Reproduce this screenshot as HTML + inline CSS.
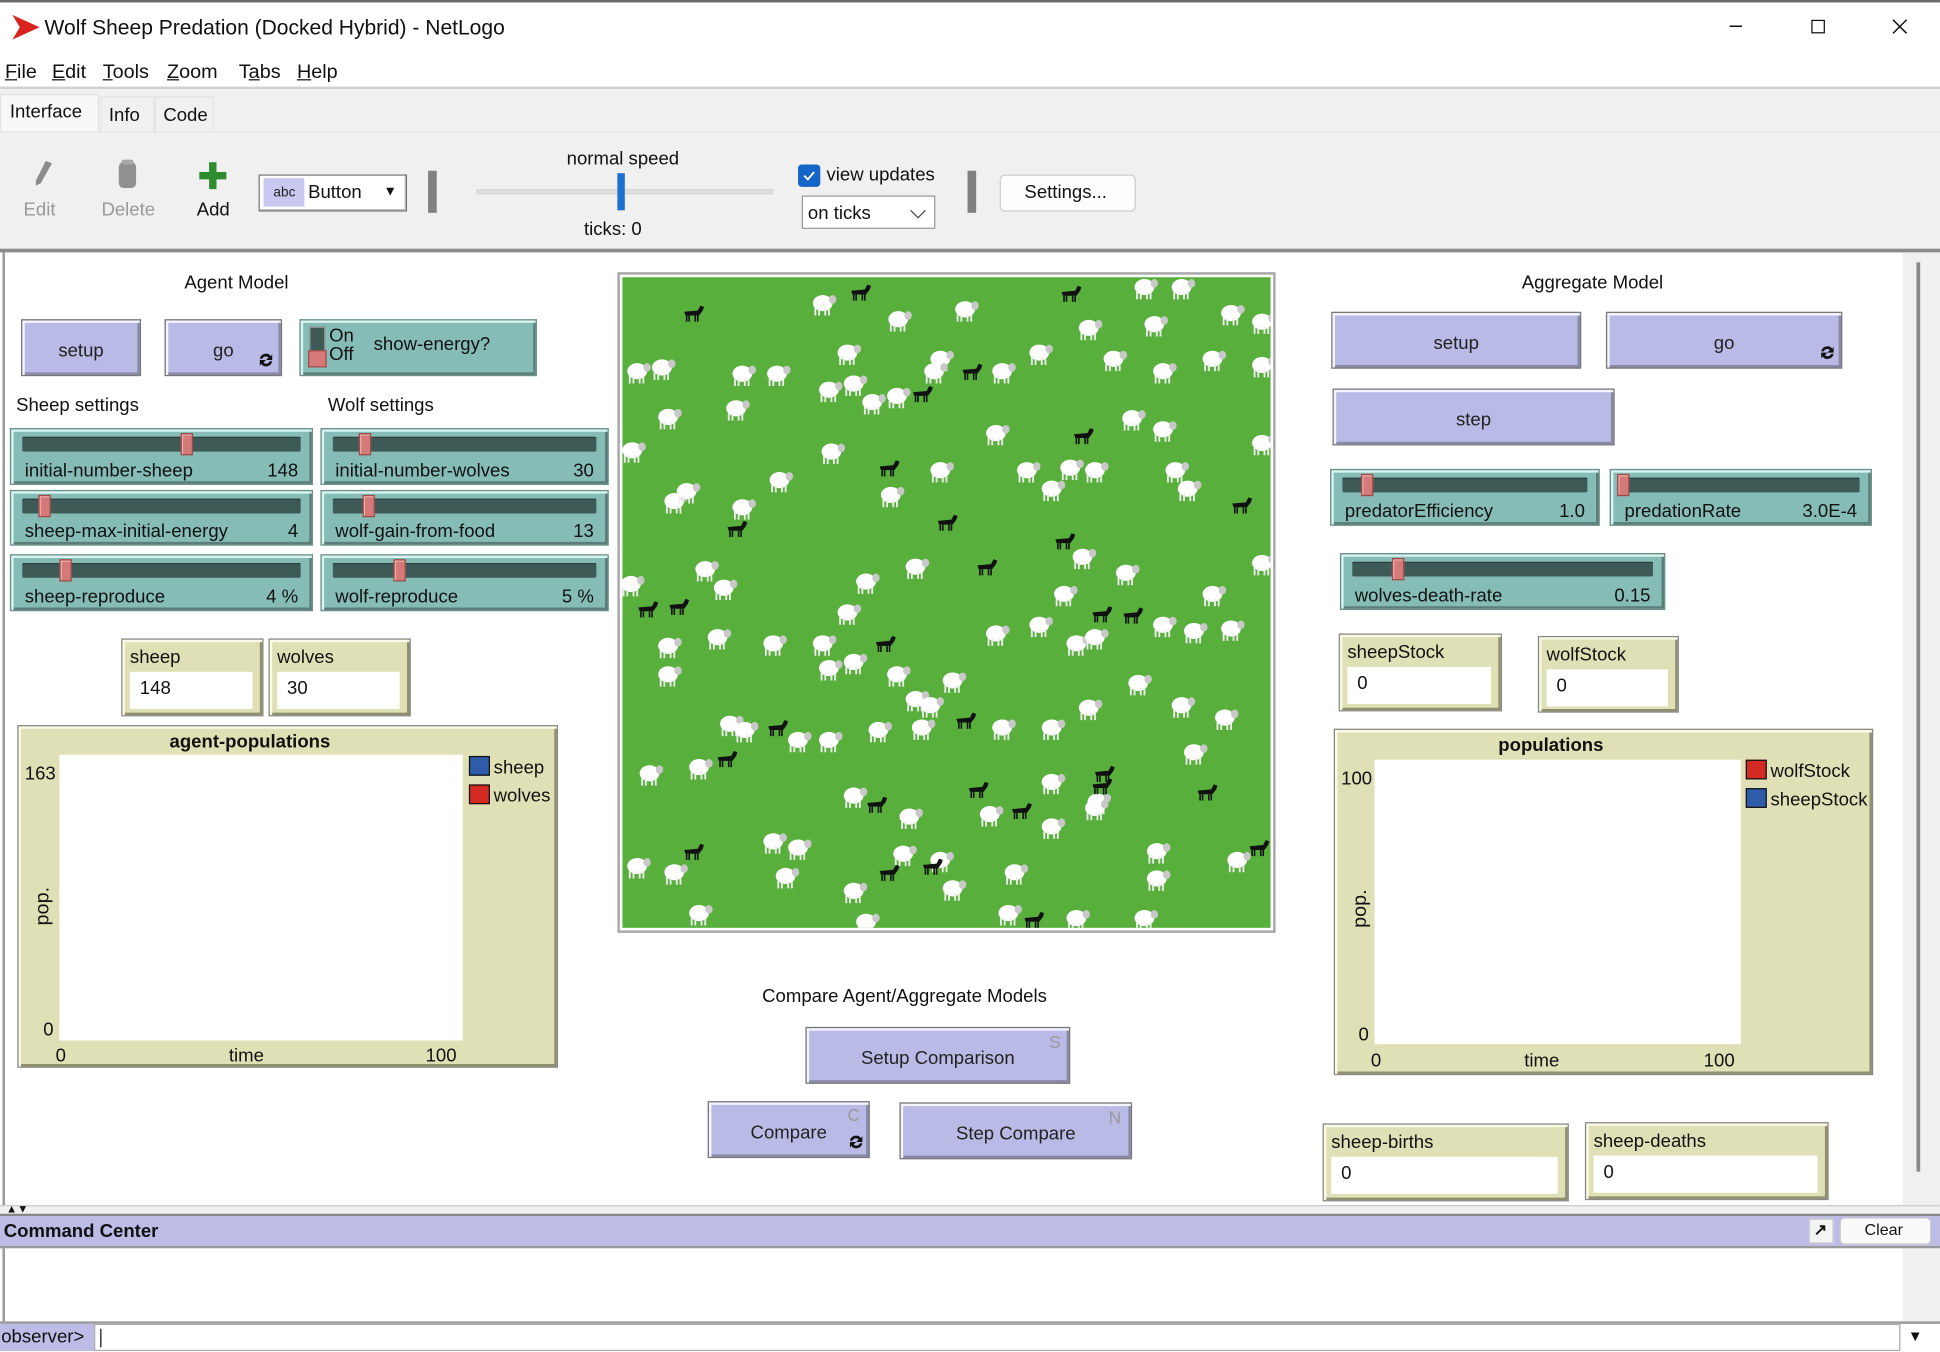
<!DOCTYPE html>
<html><head><meta charset="utf-8">
<style>
*{box-sizing:border-box;margin:0;padding:0}
html,body{width:1940px;height:1352px;overflow:hidden;background:#fff}
#w{position:absolute;left:0;top:0;width:1568px;height:1093px;transform:scale(1.23724);transform-origin:0 0;font-family:"Liberation Sans",sans-serif;color:#111;font-size:15px;background:#fff}
.a{position:absolute}
.t{position:absolute;white-space:nowrap}
.btn{position:absolute;background:#babae6;border:1px solid #777;box-shadow:inset 2px 2px 0 #f4f4ff,inset -2px -2px 0 #8a8aa8;display:flex;align-items:center;justify-content:center;font-size:15px;color:#222;padding-top:4px}
.sl{position:absolute;background:#85bdb6;border:1px solid #6e8f8a;box-shadow:inset 2px 2px 0 #d8f4f0,inset -2px -2px 0 #5b7e79}
.sl .tr{position:absolute;left:9px;right:9px;top:6px;height:12px;background:#3e5a56;border-radius:1px;box-shadow:inset 0 1px 0 #2b3f3c}
.sl .kn{position:absolute;top:3px;width:10px;height:18px;background:#d57a78;border:1px solid #9a4c4a;box-shadow:inset 1px 1px 0 #f0b0ae}
.sl .l{position:absolute;left:11px;bottom:2px;font-size:15px;color:#111}
.sl .v{position:absolute;right:11px;bottom:2px;font-size:15px;color:#111}
.mon{position:absolute;background:#e0e0b6;border:1px solid #888;box-shadow:inset 2px 2px 0 #fafae8,inset -2px -2px 0 #8f8f70}
.mon .l{position:absolute;left:6px;top:6px;font-size:15px}
.mon .b{position:absolute;left:6px;right:8px;top:26px;height:30px;background:#fff;padding:5px 8px;font-size:15px}
.plot{position:absolute;background:#e0e0b6;border:1px solid #888;box-shadow:inset 2px 2px 0 #fafae8,inset -2px -2px 0 #8f8f70}
.ic{font-size:12px;color:#222}
</style></head><body><div id="w">

<div class="a" style="left:0;top:0;width:1568px;height:2px;background:#6b6b6b"></div>
<svg class="a" style="left:9px;top:11px" width="24" height="22"><path d="M1 1 L23 11 L1 21 L7 11 Z" fill="#d8231f"/></svg>
<div class="t" style="left:36px;top:13px;font-size:17px">Wolf Sheep Predation (Docked Hybrid) - NetLogo</div>
<div class="t" style="left:1398px;top:10px;font-size:18px">&#8211;</div>
<div class="a" style="left:1464px;top:16px;width:11px;height:11px;border:1px solid #111"></div>
<svg class="a" style="left:1529px;top:15px" width="13" height="13"><path d="M1 1L12 12M12 1L1 12" stroke="#111" stroke-width="1.2"/></svg>
<div class="t" style="left:4px;top:50px;font-size:16px"><span class="a" style="left:0"><u>F</u>ile</span><span class="a" style="left:38px"><u>E</u>dit</span><span class="a" style="left:79px"><u>T</u>ools</span><span class="a" style="left:131px"><u>Z</u>oom</span><span class="a" style="left:189px">T<u>a</u>bs</span><span class="a" style="left:236px"><u>H</u>elp</span></div>
<div class="a" style="left:0;top:70px;width:1568px;height:2px;background:#d0d0d0"></div>
<div class="a" style="left:0;top:72px;width:1568px;height:132px;background:#f0f0f0"></div>
<div class="a" style="left:0;top:76px;width:80px;height:30px;background:#f8f8f8;border:1px solid #e2e2e2;border-bottom:none"></div>
<div class="t" style="left:8px;top:82px;font-size:15px">Interface</div>
<div class="a" style="left:81px;top:78px;width:44px;height:28px;border:1px solid #e2e2e2;border-bottom:none"></div>
<div class="t" style="left:88px;top:85px;font-size:15px">Info</div>
<div class="a" style="left:125px;top:78px;width:48px;height:28px;border:1px solid #e2e2e2;border-bottom:none"></div>
<div class="t" style="left:132px;top:85px;font-size:15px">Code</div>
<div class="a" style="left:0;top:106px;width:1568px;height:1px;background:#e4e4e4"></div>
<svg class="a" style="left:26px;top:128px" width="18" height="24"><path d="M11 2 L16 4 L7 20 L3 22 L3 18 Z" fill="#8c8c8c"/></svg>
<div class="t" style="left:19px;top:161px;font-size:15px;color:#999">Edit</div>
<svg class="a" style="left:94px;top:128px" width="18" height="26"><rect x="2" y="3" width="14" height="21" rx="4" fill="#909090"/><rect x="4" y="1" width="10" height="4" rx="2" fill="#a8a8a8"/></svg>
<div class="t" style="left:82px;top:161px;font-size:15px;color:#999">Delete</div>
<svg class="a" style="left:161px;top:131px" width="22" height="22"><path d="M8 0h6v8h8v6h-8v8h-6v-8h-8v-6h8z" fill="#2e8b2e"/></svg>
<div class="t" style="left:159px;top:161px;font-size:15px">Add</div>
<div class="a" style="left:209px;top:141px;width:120px;height:30px;background:#fff;border:1px solid #777;box-shadow:inset -1px -1px 0 #bbb"></div>
<div class="a" style="left:213px;top:144px;width:33px;height:23px;background:#c8c8f0"></div>
<div class="t ic" style="left:221px;top:150px;font-size:11px">abc</div>
<div class="t" style="left:249px;top:147px;font-size:15px">Button</div>
<div class="t" style="left:310px;top:149px;font-size:11px">&#9660;</div>
<div class="a" style="left:346px;top:138px;width:7px;height:34px;background:#808080"></div>
<div class="t" style="left:458px;top:120px;font-size:15px">normal speed</div>
<div class="a" style="left:385px;top:153px;width:240px;height:4px;background:#e0e0e0;border:1px solid #d4d4d4"></div>
<div class="a" style="left:499px;top:140px;width:6px;height:30px;background:#1e6fd0"></div>
<div class="t" style="left:472px;top:177px;font-size:15px">ticks: 0</div>
<div class="a" style="left:645px;top:133px;width:18px;height:18px;background:#1565c8;border-radius:3px"></div>
<svg class="a" style="left:648px;top:136px" width="12" height="12"><path d="M2 6L5 9L10 3" stroke="#fff" stroke-width="1.5" fill="none"/></svg>
<div class="t" style="left:668px;top:133px;font-size:15px">view updates</div>
<div class="a" style="left:648px;top:158px;width:108px;height:27px;background:#fff;border:1px solid #999"></div>
<div class="t" style="left:653px;top:164px;font-size:15px">on ticks</div>
<svg class="a" style="left:735px;top:168px" width="14" height="10"><path d="M1 2L7 8L13 2" stroke="#444" fill="none"/></svg>
<div class="a" style="left:782px;top:138px;width:7px;height:34px;background:#808080"></div>
<div class="a" style="left:808px;top:141px;width:110px;height:30px;background:#fdfdfd;border:1px solid #ccc;border-radius:4px"></div>
<div class="t" style="left:828px;top:147px;font-size:15px">Settings...</div>
<div class="a" style="left:0;top:201px;width:1568px;height:3px;background:#8a8a8a"></div>

<div class="a" style="left:2px;top:204px;width:2px;height:770px;background:#9a9a9a"></div>
<div class="a" style="left:1538px;top:204px;width:30px;height:770px;background:#f0f0f0"></div>
<div class="a" style="left:1549px;top:212px;width:3px;height:735px;background:#8a8a8a"></div>

<div class="t" style="left:149px;top:220px">Agent Model</div>
<div class="btn" style="left:17px;top:258px;width:97px;height:46px">setup</div>
<div class="btn" style="left:133px;top:258px;width:95px;height:46px">go</div>
<svg class="a" style="left:208px;top:284px" width="14" height="14"><path d="M2 6A5 5 0 0 1 11 4L12 2L12 7L7 7L9 5A3 3 0 0 0 4 6Z M12 8A5 5 0 0 1 3 10L2 12L2 7L7 7L5 9A3 3 0 0 0 10 8Z" fill="#111"/></svg>
<div class="sl" style="left:242px;top:258px;width:192px;height:46px"></div>
<div class="a" style="left:250px;top:264px;width:13px;height:32px;background:#3e5a56;border:1px solid #999"></div>
<div class="a" style="left:249px;top:283px;width:15px;height:14px;background:#d57a78;border:1px solid #9a4c4a"></div>
<div class="t" style="left:266px;top:264px;font-size:15px;line-height:15px">On<br>Off</div>
<div class="t" style="left:302px;top:270px">show-energy?</div>

<div class="t" style="left:13px;top:319px">Sheep settings</div>
<div class="t" style="left:265px;top:319px">Wolf settings</div>

<div class="sl" style="left:8px;top:346px;width:245px;height:46px"><div class="tr"></div><div class="kn" style="left:137px"></div><span class="l">initial-number-sheep</span><span class="v">148</span></div>
<div class="sl" style="left:8px;top:396px;width:245px;height:45px"><div class="tr"></div><div class="kn" style="left:22px"></div><span class="l">sheep-max-initial-energy</span><span class="v">4</span></div>
<div class="sl" style="left:8px;top:448px;width:245px;height:46px"><div class="tr"></div><div class="kn" style="left:39px"></div><span class="l">sheep-reproduce</span><span class="v">4 %</span></div>
<div class="sl" style="left:259px;top:346px;width:233px;height:46px"><div class="tr"></div><div class="kn" style="left:30px"></div><span class="l">initial-number-wolves</span><span class="v">30</span></div>
<div class="sl" style="left:259px;top:396px;width:233px;height:45px"><div class="tr"></div><div class="kn" style="left:33px"></div><span class="l">wolf-gain-from-food</span><span class="v">13</span></div>
<div class="sl" style="left:259px;top:448px;width:233px;height:46px"><div class="tr"></div><div class="kn" style="left:58px"></div><span class="l">wolf-reproduce</span><span class="v">5 %</span></div>

<div class="mon" style="left:98px;top:516px;width:115px;height:63px"><span class="l">sheep</span><div class="b">148</div></div>
<div class="mon" style="left:217px;top:516px;width:115px;height:63px"><span class="l">wolves</span><div class="b">30</div></div>

<div class="plot" style="left:14px;top:586px;width:437px;height:277px"></div>
<div class="t" style="left:137px;top:591px;font-weight:bold;font-size:15px">agent-populations</div>
<div class="a" style="left:48px;top:610px;width:326px;height:231px;background:#fff"></div>
<div class="t" style="left:20px;top:617px">163</div>
<div class="t" style="left:35px;top:824px">0</div>
<div class="t" style="left:45px;top:845px">0</div>
<div class="t" style="left:185px;top:845px">time</div>
<div class="t" style="left:344px;top:845px">100</div>
<div class="t" style="left:26px;top:748px;transform:rotate(-90deg);transform-origin:0 0;font-size:16px">pop.</div>
<div class="a" style="left:379px;top:611px;width:17px;height:16px;background:#2e5ca8;border:1px solid #111"></div>
<div class="t" style="left:399px;top:612px">sheep</div>
<div class="a" style="left:379px;top:634px;width:17px;height:16px;background:#d42a24;border:1px solid #111"></div>
<div class="t" style="left:399px;top:635px">wolves</div>

<div class="a" style="left:499px;top:220px;width:532px;height:534px;border:2px solid #a8a8a8;background:#fff"></div>
<svg class="a" style="left:503px;top:224px" width="524" height="526" viewBox="0 0 524 526">
<defs>
<g id="s"><ellipse cx="0" cy="0" rx="8" ry="6.5" fill="#fff"/><ellipse cx="8" cy="-3" rx="3" ry="3.5" fill="#c8c8c8"/><path d="M-6 4v6M-3 4v6M2 4v6M5 4v6" stroke="#eee" stroke-width="1.5"/></g>
<g id="f"><path d="M-7 -1 L4 -2 L6 -6 L9 -5 L8 -2 L5 2 L-6 2 Z" fill="#111"/><path d="M-5 2v5M-3 2v5M2 2v5M4 2v5" stroke="#111" stroke-width="1.3"/></g>
</defs>
<rect width="524" height="526" fill="#58af3c"/>
<g>
<use href="#s" x="162" y="21"/><use href="#s" x="277" y="26"/><use href="#s" x="223" y="34"/><use href="#s" x="377" y="41"/><use href="#s" x="430" y="38"/><use href="#s" x="492" y="29"/><use href="#s" x="452" y="8"/><use href="#s" x="422" y="8"/><use href="#s" x="12" y="76"/><use href="#s" x="32" y="73"/><use href="#s" x="97" y="78"/><use href="#s" x="125" y="78"/><use href="#s" x="92" y="106"/><use href="#s" x="37" y="113"/><use href="#s" x="182" y="61"/><use href="#s" x="167" y="91"/><use href="#s" x="187" y="86"/><use href="#s" x="202" y="101"/><use href="#s" x="222" y="96"/><use href="#s" x="257" y="66"/><use href="#s" x="252" y="76"/><use href="#s" x="307" y="76"/><use href="#s" x="337" y="61"/><use href="#s" x="397" y="66"/><use href="#s" x="437" y="76"/><use href="#s" x="477" y="66"/><use href="#s" x="517" y="71"/><use href="#s" x="412" y="114"/><use href="#s" x="437" y="123"/><use href="#s" x="302" y="126"/><use href="#s" x="169" y="141"/><use href="#s" x="257" y="156"/><use href="#s" x="327" y="156"/><use href="#s" x="362" y="154"/><use href="#s" x="382" y="156"/><use href="#s" x="447" y="156"/><use href="#s" x="457" y="171"/><use href="#s" x="347" y="171"/><use href="#s" x="217" y="176"/><use href="#s" x="127" y="164"/><use href="#s" x="42" y="181"/><use href="#s" x="97" y="186"/><use href="#s" x="52" y="173"/><use href="#s" x="67" y="236"/><use href="#s" x="82" y="251"/><use href="#s" x="7" y="248"/><use href="#s" x="37" y="298"/><use href="#s" x="77" y="291"/><use href="#s" x="37" y="321"/><use href="#s" x="122" y="296"/><use href="#s" x="182" y="271"/><use href="#s" x="162" y="296"/><use href="#s" x="197" y="246"/><use href="#s" x="237" y="234"/><use href="#s" x="302" y="288"/><use href="#s" x="337" y="281"/><use href="#s" x="357" y="256"/><use href="#s" x="372" y="226"/><use href="#s" x="407" y="239"/><use href="#s" x="367" y="296"/><use href="#s" x="382" y="291"/><use href="#s" x="462" y="286"/><use href="#s" x="492" y="284"/><use href="#s" x="437" y="281"/><use href="#s" x="477" y="256"/><use href="#s" x="517" y="231"/><use href="#s" x="167" y="316"/><use href="#s" x="187" y="311"/><use href="#s" x="222" y="321"/><use href="#s" x="267" y="326"/><use href="#s" x="237" y="341"/><use href="#s" x="249" y="346"/><use href="#s" x="417" y="328"/><use href="#s" x="452" y="346"/><use href="#s" x="487" y="356"/><use href="#s" x="377" y="348"/><use href="#s" x="347" y="364"/><use href="#s" x="87" y="361"/><use href="#s" x="99" y="366"/><use href="#s" x="142" y="374"/><use href="#s" x="167" y="374"/><use href="#s" x="207" y="366"/><use href="#s" x="242" y="364"/><use href="#s" x="307" y="364"/><use href="#s" x="462" y="384"/><use href="#s" x="384" y="424"/><use href="#s" x="347" y="408"/><use href="#s" x="22" y="401"/><use href="#s" x="62" y="396"/><use href="#s" x="187" y="419"/><use href="#s" x="232" y="436"/><use href="#s" x="297" y="434"/><use href="#s" x="347" y="444"/><use href="#s" x="382" y="429"/><use href="#s" x="122" y="456"/><use href="#s" x="142" y="461"/><use href="#s" x="227" y="466"/><use href="#s" x="257" y="471"/><use href="#s" x="317" y="481"/><use href="#s" x="432" y="464"/><use href="#s" x="432" y="486"/><use href="#s" x="497" y="471"/><use href="#s" x="12" y="476"/><use href="#s" x="42" y="481"/><use href="#s" x="132" y="484"/><use href="#s" x="187" y="496"/><use href="#s" x="267" y="494"/><use href="#s" x="312" y="514"/><use href="#s" x="367" y="518"/><use href="#s" x="422" y="518"/><use href="#s" x="62" y="514"/><use href="#s" x="197" y="521"/><use href="#s" x="517" y="36"/><use href="#s" x="8" y="140"/><use href="#s" x="517" y="134"/>
<use href="#f" x="57" y="29"/><use href="#f" x="192" y="12"/><use href="#f" x="362" y="13"/><use href="#f" x="282" y="76"/><use href="#f" x="242" y="94"/><use href="#f" x="372" y="128"/><use href="#f" x="215" y="154"/><use href="#f" x="262" y="198"/><use href="#f" x="357" y="213"/><use href="#f" x="500" y="184"/><use href="#f" x="92" y="203"/><use href="#f" x="294" y="234"/><use href="#f" x="20" y="268"/><use href="#f" x="45" y="266"/><use href="#f" x="387" y="272"/><use href="#f" x="412" y="273"/><use href="#f" x="212" y="296"/><use href="#f" x="277" y="358"/><use href="#f" x="125" y="364"/><use href="#f" x="84" y="389"/><use href="#f" x="205" y="426"/><use href="#f" x="287" y="414"/><use href="#f" x="322" y="431"/><use href="#f" x="389" y="401"/><use href="#f" x="472" y="416"/><use href="#f" x="57" y="464"/><use href="#f" x="215" y="481"/><use href="#f" x="250" y="476"/><use href="#f" x="332" y="519"/><use href="#f" x="514" y="461"/><use href="#f" x="387" y="411"/>
</g>
</svg>

<div class="t" style="left:616px;top:797px">Compare Agent/Aggregate Models</div>
<div class="btn" style="left:651px;top:830px;width:214px;height:46px">Setup Comparison</div>
<div class="t" style="left:848px;top:834px;color:#999;font-size:14px">S</div>
<div class="btn" style="left:572px;top:890px;width:131px;height:46px">Compare</div>
<div class="t" style="left:685px;top:893px;color:#999;font-size:14px">C</div>
<svg class="a" style="left:685px;top:916px" width="14" height="14"><path d="M2 6A5 5 0 0 1 11 4L12 2L12 7L7 7L9 5A3 3 0 0 0 4 6Z M12 8A5 5 0 0 1 3 10L2 12L2 7L7 7L5 9A3 3 0 0 0 10 8Z" fill="#111"/></svg>
<div class="btn" style="left:727px;top:891px;width:188px;height:46px">Step Compare</div>
<div class="t" style="left:896px;top:895px;color:#999;font-size:14px">N</div>

<div class="t" style="left:1230px;top:220px">Aggregate Model</div>
<div class="btn" style="left:1076px;top:252px;width:202px;height:46px">setup</div>
<div class="btn" style="left:1298px;top:252px;width:191px;height:46px">go</div>
<svg class="a" style="left:1470px;top:278px" width="14" height="14"><path d="M2 6A5 5 0 0 1 11 4L12 2L12 7L7 7L9 5A3 3 0 0 0 4 6Z M12 8A5 5 0 0 1 3 10L2 12L2 7L7 7L5 9A3 3 0 0 0 10 8Z" fill="#111"/></svg>
<div class="btn" style="left:1077px;top:314px;width:228px;height:46px">step</div>
<div class="sl" style="left:1075px;top:379px;width:218px;height:46px"><div class="tr"></div><div class="kn" style="left:24px"></div><span class="l">predatorEfficiency</span><span class="v">1.0</span></div>
<div class="sl" style="left:1301px;top:379px;width:212px;height:46px"><div class="tr"></div><div class="kn" style="left:5px"></div><span class="l">predationRate</span><span class="v">3.0E-4</span></div>
<div class="sl" style="left:1083px;top:447px;width:263px;height:46px"><div class="tr"></div><div class="kn" style="left:41px"></div><span class="l">wolves-death-rate</span><span class="v">0.15</span></div>
<div class="mon" style="left:1082px;top:512px;width:132px;height:63px"><span class="l">sheepStock</span><div class="b">0</div></div>
<div class="mon" style="left:1243px;top:514px;width:114px;height:62px"><span class="l">wolfStock</span><div class="b">0</div></div>

<div class="plot" style="left:1078px;top:589px;width:436px;height:280px"></div>
<div class="t" style="left:1211px;top:594px;font-weight:bold">populations</div>
<div class="a" style="left:1111px;top:614px;width:296px;height:230px;background:#fff"></div>
<div class="t" style="left:1084px;top:621px">100</div>
<div class="t" style="left:1098px;top:828px">0</div>
<div class="t" style="left:1108px;top:849px">0</div>
<div class="t" style="left:1232px;top:849px">time</div>
<div class="t" style="left:1377px;top:849px">100</div>
<div class="t" style="left:1091px;top:750px;transform:rotate(-90deg);transform-origin:0 0;font-size:16px">pop.</div>
<div class="a" style="left:1411px;top:614px;width:17px;height:16px;background:#d42a24;border:1px solid #111"></div>
<div class="t" style="left:1431px;top:615px">wolfStock</div>
<div class="a" style="left:1411px;top:637px;width:17px;height:16px;background:#2e5ca8;border:1px solid #111"></div>
<div class="t" style="left:1431px;top:638px">sheepStock</div>

<div class="mon" style="left:1069px;top:908px;width:199px;height:63px"><span class="l">sheep-births</span><div class="b">0</div></div>
<div class="mon" style="left:1281px;top:907px;width:197px;height:63px"><span class="l">sheep-deaths</span><div class="b">0</div></div>

<div class="a" style="left:0;top:974px;width:1568px;height:9px;background:#f0f0f0;border-top:1px solid #ccc"></div>
<div class="t" style="left:5px;top:972px;font-size:9px">&#9650;&#9660;</div>
<div class="a" style="left:0;top:981px;width:1568px;height:2px;background:#888"></div>
<div class="a" style="left:0;top:983px;width:1568px;height:24px;background:#bcbce6"></div>
<div class="t" style="left:3px;top:987px;font-weight:bold;font-size:15px">Command Center</div>
<div class="a" style="left:1462px;top:985px;width:20px;height:20px;background:#f4f4f4;border:1px solid #ccc"></div>
<div class="t" style="left:1466px;top:986px;font-size:13px;font-weight:bold">&#8599;</div>
<div class="a" style="left:1487px;top:984px;width:74px;height:22px;background:#fafafa;border:1px solid #ccc;border-radius:4px"></div>
<div class="t" style="left:1507px;top:986px;font-size:13px">Clear</div>
<div class="a" style="left:0;top:1007px;width:1568px;height:2px;background:#999"></div>
<div class="a" style="left:2px;top:1009px;width:1536px;height:59px;background:#fff;border-left:2px solid #999"></div>
<div class="a" style="left:1538px;top:1009px;width:30px;height:59px;background:#f0f0f0"></div>
<div class="a" style="left:0;top:1068px;width:1568px;height:2px;background:#999"></div>
<div class="a" style="left:0;top:1070px;width:76px;height:22px;background:#bcbce6"></div>
<div class="t" style="left:1px;top:1072px;font-size:15px">observer&gt;</div>
<div class="a" style="left:76px;top:1070px;width:1460px;height:22px;background:#fff;border:1px solid #aaa"></div>
<div class="a" style="left:81px;top:1074px;width:1px;height:15px;background:#111"></div>
<div class="t" style="left:1542px;top:1073px;font-size:12px">&#9660;</div>
</div></body></html>
